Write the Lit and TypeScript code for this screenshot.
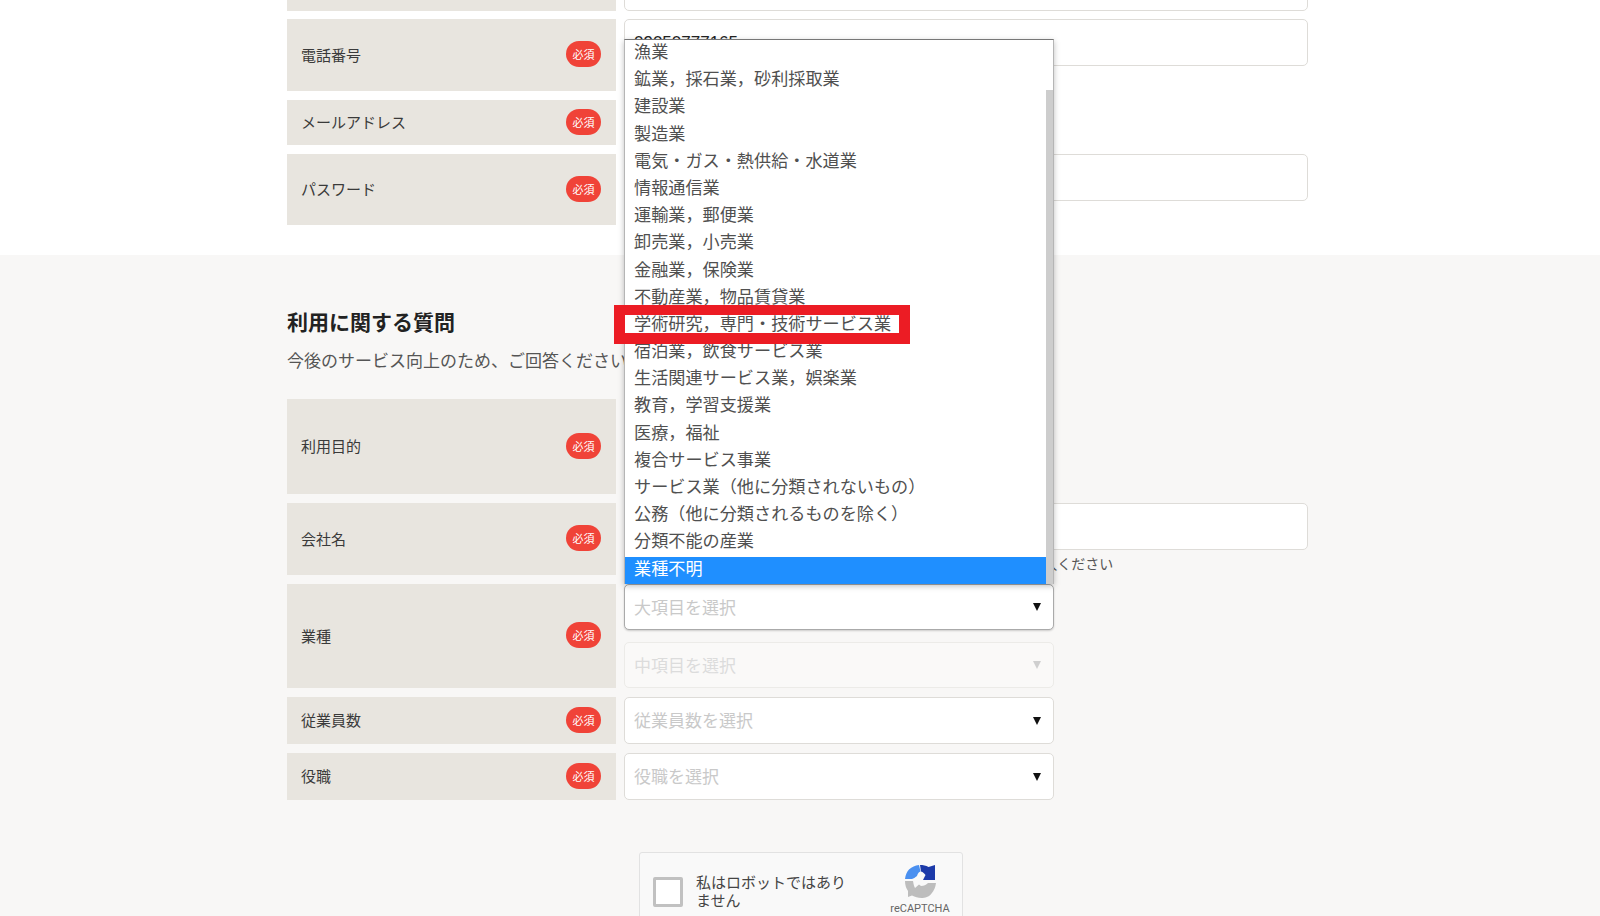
import { LitElement, html, css, svg } from "lit";
import { customElement } from "lit/decorators.js";

const INDUSTRIES = [
  "漁業", "鉱業，採石業，砂利採取業", "建設業", "製造業", "電気・ガス・熱供給・水道業", "情報通信業",
  "運輸業，郵便業", "卸売業，小売業", "金融業，保険業", "不動産業，物品賃貸業", "学術研究，専門・技術サービス業",
  "宿泊業，飲食サービス業", "生活関連サービス業，娯楽業", "教育，学習支援業", "医療，福祉", "複合サービス事業",
  "サービス業（他に分類されないもの）", "公務（他に分類されるものを除く）", "分類不能の産業", "業種不明",
];

const logo = svg`<svg class="logo" viewBox="0 0 31 33" width="31" height="33" aria-hidden="true">
  <path fill="#4a90f0" d="M0 14C.5 10 2 6.500 4 4.500 7 2 10 .5 14 0l1.500 6.500c-1.500.5-2.500 1.500-3.500 4.500-2 1.500-3.500 2.500-5 3H0z"/>
  <path fill="#1c3aa9" d="M15 0c3 0 6 .5 8.500 2L30 0v15H18l2.500-5c-1-1.500-2.500-3-4.500-3.500z"/>
  <path fill="#bdbdbd" d="M0 16h8c.5 3 1 5 2 7l4-3.500 2 1.500c3 0 5-1 7-3h8c-.5 4-2 8-4.500 10.500C24 32 20 33 16.500 33 13 33 10 32 7 30.500L3 32V26C1 23 0 20 0 16z"/>
</svg>`;

@customElement("app-root")
export class AppRoot extends LitElement {
  static styles = css`
    :host {
      display: block;
      position: relative;
      width: 1600px;
      height: 916px;
      overflow: hidden;
      background: #f8f7f6;
      font-family: "Noto Sans CJK JP", "Liberation Sans", sans-serif;
      color: #3a3a3a;
    }
    .top { background: #fff; height: 255px; }
    .wrap {
      width: 1022px;
      margin-left: 287px;
      display: flex;
      flex-direction: column;
      gap: 9px;
    }
    .row { display: grid; grid-template-columns: 329px 684px; gap: 8px; }
    .lab {
      background: #e8e5df;
      display: flex;
      align-items: center;
      justify-content: space-between;
      padding: 0 15px 2px 14px;
      font-size: 15px;
    }
    .pill {
      width: 35px;
      height: 26px;
      border-radius: 13px;
      background: #f04338;
      color: #fff;
      font-size: 11px;
      display: flex;
      align-items: center;
      justify-content: center;
      flex: none;
    }
    .box {
      background: #fff;
      border: 1px solid #dedcd8;
      border-radius: 5px;
      box-sizing: border-box;
      height: 47px;
      display: flex;
      align-items: center;
      justify-content: space-between;
      padding: 0 12px 0 9px;
      font-size: 17px;
    }
    .half { width: 430px; }
    .ph { color: #c9c9c9; position: relative; top: -1px; }
    .val { color: #222; font-family: "Liberation Sans", sans-serif; }
    .off { background: #faf9f8; border-color: #ecebe8; }
    .off .ph { color: #dcdcdc; }
    .focus { border-color: #aaa; box-shadow: 0 1px 2px rgba(0,0,0,.18); }
    .arrow {
      width: 0; height: 0;
      border-left: 4px solid transparent;
      border-right: 4px solid transparent;
      border-top: 8px solid #111;
    }
    .off .arrow { border-top-color: #cfcfcf; }
    .r0 { height: 11px; overflow: hidden; margin-bottom: -1px; }
    .r0 .box { margin-top: -36px; }
    .r1 { height: 72px; }
    .rm { height: 45px; }
    .rm .box { height: 45px; }
    .r2 { height: 47px; }
    .r3 { height: 71px; }
    .r4 { height: 95px; }
    .r5 { height: 72px; }
    .r6 { height: 104px; }
    .stack { display: flex; flex-direction: column; gap: 12px; }
    .stack .box { height: 46px; }
    .hint { font-size: 14px; line-height: 18px; margin-top: 4px; white-space: nowrap; color: #555; }
    .section { padding-top: 52px; }
    h2 { margin: 0 0 12px; font-size: 21px; line-height: 28px; font-weight: 700; color: #222; }
    .sub { margin: 0 0 17px; font-size: 17px; line-height: 26px; color: #555; white-space: nowrap; }
    .captcha-row { margin: 52px 0 0 639px; }
    .captcha {
      width: 324px;
      height: 90px;
      box-sizing: border-box;
      background: #f9f9f9;
      border: 1px solid #e2e2e2;
      border-radius: 3px;
      display: flex;
      padding: 24px 11px 0 13px;
    }
    .check {
      width: 30px; height: 30px; box-sizing: border-box;
      border: 3px solid #c1c1c1; border-radius: 2px; background: #fff; flex: none;
    }
    .ctext { margin: -4px 0 0 13px; font: 15px/18px "Noto Sans CJK JP", sans-serif; color: #444; width: 156px; }
    .brand { margin: -12px 0 0 auto; display: flex; flex-direction: column; align-items: center; width: 62px; }
    .logo { display: block; }
    .brand span { font: 11px/13px Roboto, sans-serif; color: #666; margin-top: 4px; }
    .dd {
      position: absolute;
      left: 624px;
      top: 39px;
      width: 430px;
      height: 545px;
      box-sizing: border-box;
      background: #fff;
      border: 1px solid #b5b5b5;
      border-top-color: #777;
      border-bottom: none;
      box-shadow: 0 2px 6px rgba(0,0,0,.25);
      overflow: hidden;
    }
    .item {
      height: 27.2px;
      line-height: 22.2px;
      padding: 0 0 5px 9px;
      width: 421px;
      box-sizing: border-box;
      font-size: 17.15px;
      color: #505050;
      white-space: nowrap;
    }
    .item.sel { background: #1f8fff; color: #fff; }
    .thumb {
      position: absolute;
      right: 0;
      top: 50px;
      bottom: 0;
      width: 7px;
      background: #cdcdcd;
    }
    .callout {
      position: absolute;
      left: 614px;
      top: 305px;
      width: 296px;
      height: 39px;
      box-sizing: border-box;
      border: solid #ec1c24;
      border-width: 10px 11px 11px 11px;
      pointer-events: none;
    }
  `;

  private lab(text: string) {
    return html`<div class="lab"><span>${text}</span><span class="pill">必須</span></div>`;
  }

  render() {
    return html`
      <div class="top">
        <div class="wrap">
          <div class="row r0">
            <div class="lab"></div>
            <div class="box"></div>
          </div>
          <div class="row r1">
            ${this.lab("電話番号")}
            <div class="box"><span class="val">09050777165</span></div>
          </div>
          <div class="row rm">
            ${this.lab("メールアドレス")}
            <div class="box half"></div>
          </div>
          <div class="row r3">
            ${this.lab("パスワード")}
            <div class="box"></div>
          </div>
        </div>
      </div>
      <div class="section">
        <div class="wrap">
          <div>
            <h2>利用に関する質問</h2>
            <p class="sub">今後のサービス向上のため、ご回答ください。</p>
          </div>
          <div class="row r4">
            ${this.lab("利用目的")}
            <div></div>
          </div>
          <div class="row r5">
            ${this.lab("会社名")}
            <div>
              <div class="box"></div>
              <div class="hint">法人名は正式名称で、個人の方は屋号または氏名を省略せずにご記入ください</div>
            </div>
          </div>
          <div class="row r6">
            ${this.lab("業種")}
            <div class="stack">
              <div class="box half focus"><span class="ph">大項目を選択</span><span class="arrow"></span></div>
              <div class="box half off"><span class="ph">中項目を選択</span><span class="arrow"></span></div>
            </div>
          </div>
          <div class="row r2">
            ${this.lab("従業員数")}
            <div class="box half"><span class="ph">従業員数を選択</span><span class="arrow"></span></div>
          </div>
          <div class="row r2">
            ${this.lab("役職")}
            <div class="box half"><span class="ph">役職を選択</span><span class="arrow"></span></div>
          </div>
        </div>
        <div class="captcha-row">
          <div class="captcha">
            <div class="check"></div>
            <p class="ctext">私はロボットではありません</p>
            <div class="brand">${logo}<span>reCAPTCHA</span></div>
          </div>
        </div>
      </div>
      <div class="dd">
        ${INDUSTRIES.map((t, i) => html`<div class="item ${i === 19 ? "sel" : ""}">${t}</div>`)}
        <div class="thumb"></div>
      </div>
      <div class="callout"></div>
    `;
  }
}
